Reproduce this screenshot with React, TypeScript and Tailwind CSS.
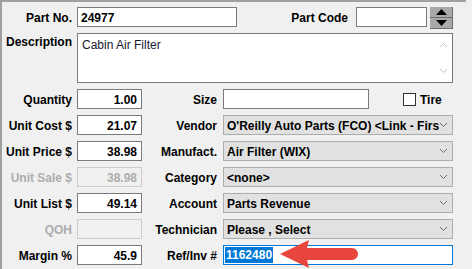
import React from 'react';

const ff = "font-['Liberation_Sans',Arial,sans-serif]";

const Chevron = ({ color = '#6e6e6e' }: { color?: string }) => (
  <svg width="9" height="6" viewBox="0 0 9 6" className="shrink-0">
    <path d="M1 1l3.5 3.5L8 1" fill="none" stroke={color} strokeWidth="1" />
  </svg>
);

const Label = ({ children, w, muted }: { children: React.ReactNode; w: string; muted?: boolean }) => (
  <div className={`${w} shrink-0 text-right font-bold text-[12px] leading-[20px] pt-[1px] ${muted ? 'text-[#adadad]' : 'text-black'}`}>
    {children}
  </div>
);

const NumBox = ({ value, muted }: { value?: string; muted?: boolean }) => (
  <div
    className={`w-[65px] h-[20px] shrink-0 ml-[5px] border text-right pr-[4px] font-bold text-[12px] leading-[18px] pt-[1px] ${
      muted ? 'border-[#cccccc] bg-[#f0f0f0] text-[#adadad]' : 'border-[#7a7a7a] bg-white text-black'
    }`}
  >
    {value}
  </div>
);

const Select = ({ value }: { value: string }) => (
  <div className="w-[230px] h-[20px] ml-[6px] shrink-0 border border-[#adadad] bg-[#e1e1e1] flex items-center pl-[3px] pr-[4px]">
    <span className="flex-1 overflow-hidden whitespace-nowrap font-bold text-[12px] leading-[18px] pt-[1px] text-black">{value}</span>
    <Chevron />
  </div>
);

export default function App() {
  const rows = [
    { l: 'Unit Cost $', v: '21.07', m: 'Vendor', s: "O'Reilly Auto Parts (FCO) <Link - Firs" },
    { l: 'Unit Price $', v: '38.98', m: 'Manufact.', s: 'Air Filter (WIX)' },
    { l: 'Unit Sale $', v: '38.98', m: 'Category', s: '<none>', muted: true },
    { l: 'Unit List $', v: '49.14', m: 'Account', s: 'Parts Revenue' },
    { l: 'QOH', v: '', m: 'Technician', s: 'Please , Select', muted: true },
  ];

  return (
    <div className={`relative w-[472px] h-[269px] overflow-hidden bg-[#f0f0f0] ${ff}`}>
      <div className="h-full w-[466px] border-t-2 border-l-2 border-[#a0a0a0] pt-[5px] flex flex-col">
        {/* part no / part code */}
        <div className="flex h-[22px] items-start">
          <Label w="w-[70px]">Part No.</Label>
          <div className="w-[160px] h-[20px] ml-[5px] border border-[#7a7a7a] bg-white pl-[3px] font-bold text-[12px] leading-[18px] pt-[1px]">
            24977
          </div>
          <Label w="w-[111px]">Part Code</Label>
          <div className="w-[71px] h-[20px] ml-[8px] border border-[#7a7a7a] bg-white" />
          <div className="ml-[3px] w-[23px] h-[22px] flex flex-col">
            <div className="h-[11px] bg-[#a9a9a9] border-r border-b border-[#6b6b6b] flex items-center justify-center">
              <svg width="11" height="6" viewBox="0 0 11 6"><path d="M0 6L5.5 0L11 6Z" fill="#000" /></svg>
            </div>
            <div className="h-[11px] bg-[#a9a9a9] border-r border-b border-[#6b6b6b] flex items-center justify-center">
              <svg width="11" height="6" viewBox="0 0 11 6"><path d="M0 0L5.5 6L11 0Z" fill="#000" /></svg>
            </div>
          </div>
        </div>

        {/* description */}
        <div className="flex mt-[4px] h-[50px]">
          <div className="w-[70px] shrink-0 text-right font-bold text-[12px] leading-[14px] pt-[2px]">Description</div>
          <div className="w-[376px] ml-[5px] border border-[#7a7a7a] bg-white flex">
            <div className="flex-1 pl-[4px] pt-[4px] text-[12px] leading-[14px] text-[#161630]">Cabin Air Filter</div>
            <div className="w-[17px] flex flex-col items-center justify-between py-[8px]">
              <svg width="9" height="6" viewBox="0 0 9 6"><path d="M1 5l3.5-3.5L8 5" fill="none" stroke="#c2c2c2" /></svg>
              <svg width="9" height="6" viewBox="0 0 9 6"><path d="M1 1l3.5 3.5L8 1" fill="none" stroke="#c2c2c2" /></svg>
            </div>
          </div>
        </div>

        <div className="flex flex-col gap-[6px] mt-[6px]">
          {/* quantity / size / tire */}
          <div className="flex h-[20px] items-center">
            <Label w="w-[70px]">Quantity</Label>
            <NumBox value="1.00" />
            <Label w="w-[75px]">Size</Label>
            <div className="w-[146px] h-[20px] ml-[6px] border border-[#7a7a7a] bg-white" />
            <div className="ml-[34px] w-[13px] h-[13px] border border-[#333333] bg-white" />
            <span className="ml-[4px] font-bold text-[12px] leading-[20px] pt-[1px]">Tire</span>
          </div>

          {rows.map((r) => (
            <div key={r.l} className="flex h-[20px] items-center">
              <Label w="w-[70px]" muted={r.muted}>{r.l}</Label>
              <NumBox value={r.v} muted={r.muted} />
              <Label w="w-[75px]">{r.m}</Label>
              <Select value={r.s} />
            </div>
          ))}

          {/* margin / ref */}
          <div className="flex h-[20px] items-center">
            <Label w="w-[70px]">Margin %</Label>
            <NumBox value="45.9" />
            <Label w="w-[75px]">Ref/Inv #</Label>
            <div className="w-[230px] h-[20px] ml-[6px] border border-[#0078d7] bg-white flex items-center pl-[1px]">
              <span className="bg-[#0078d7] text-white font-bold text-[12px] leading-[16px] px-[1px]">1162480</span>
            </div>
          </div>
        </div>
      </div>

      {/* callout arrow */}
      <svg className="absolute left-[276px] top-[236px]" width="90" height="34" viewBox="0 0 90 34">
        <path d="M4 18L33 4L31 12L76 12A6 6 0 0 1 76 24L31 24L33 32Z" fill="#e8453c" />
      </svg>
    </div>
  );
}
